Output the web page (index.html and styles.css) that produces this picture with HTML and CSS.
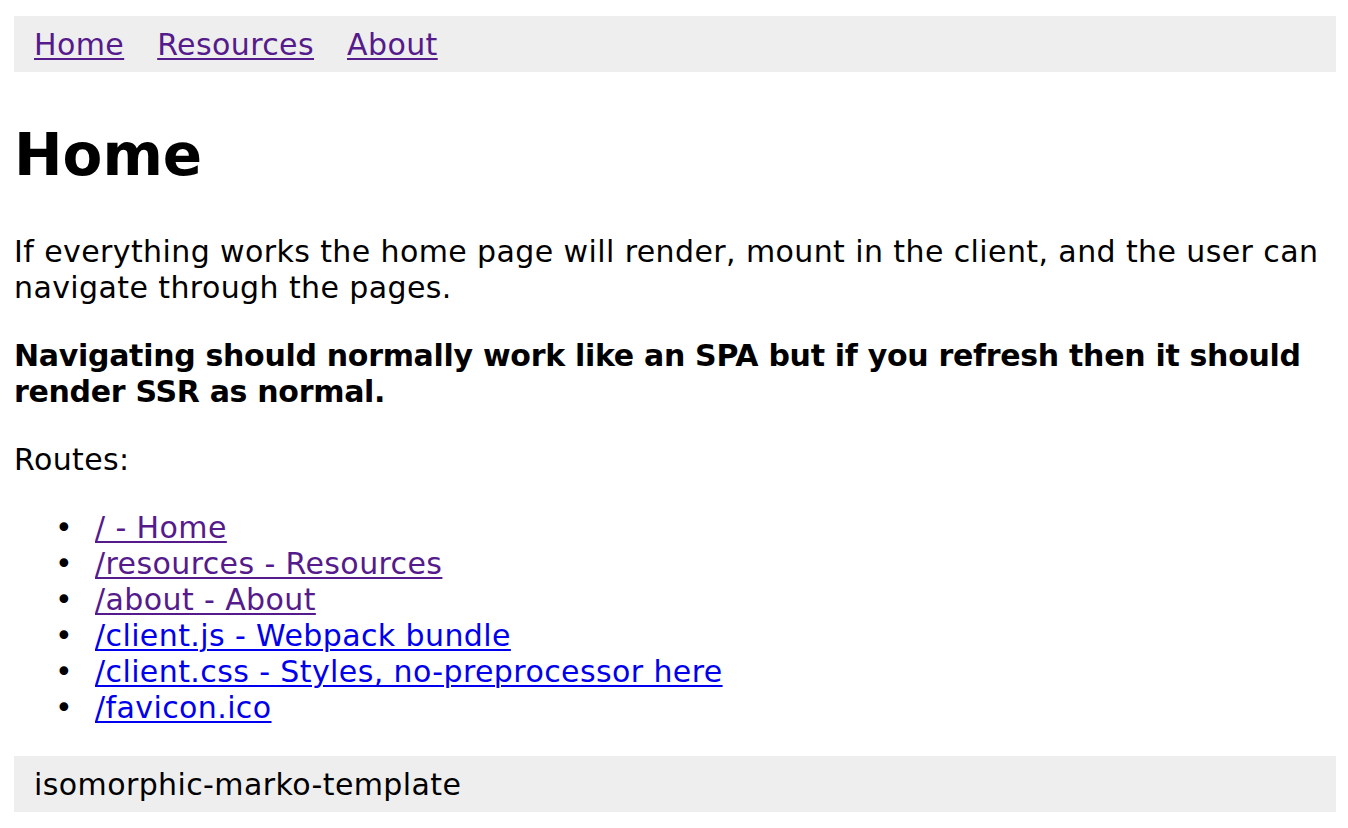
FILE: index.html
```html
<!DOCTYPE html>
<html lang="en">
<head>
<meta charset="utf-8">
<title>isomorphic-marko-template</title>
<link rel="stylesheet" href="styles.css">
</head>
<body>
<nav class="nav">
  <a class="link visited" href="#">Home</a>
  <a class="link visited" href="#">Resources</a>
  <a class="link visited" href="#">About</a>
</nav>
<main class="content">
  <h1 class="title">Home</h1>
  <p class="para">If everything works the home page will render, mount in the client, and the user can navigate through the pages.</p>
  <p class="para strong">Navigating should normally work like an SPA but if you refresh then it should render SSR as normal.</p>
  <p class="para">Routes:</p>
  <ul class="routes">
    <li class="route"><a class="link visited" href="#">/ - Home</a></li>
    <li class="route"><a class="link visited" href="#">/resources - Resources</a></li>
    <li class="route"><a class="link visited" href="#">/about - About</a></li>
    <li class="route"><a class="link" href="#">/client.js - Webpack bundle</a></li>
    <li class="route"><a class="link" href="#">/client.css - Styles, no-preprocessor here</a></li>
    <li class="route"><a class="link" href="#">/favicon.ico</a></li>
  </ul>
</main>
<footer class="footer">isomorphic-marko-template</footer>
</body>
</html>
```
FILE: styles.css
```css
html, body {
  background: #ffffff;
}
body {
  margin: 16px 12px 16px 14px;
  font-family: "DejaVu Sans", Verdana, sans-serif;
  font-size: 30px;
  line-height: 36px;
  letter-spacing: 0.4px;
  color: #000000;
}
.link {
  color: #0000ee;
  text-decoration: underline;
  text-underline-offset: 3px;
  text-decoration-thickness: 2px;
}
.link.visited {
  color: #551a8b;
}
.nav {
  background: #eeeeee;
  display: flex;
  gap: 33px;
  padding: 11px 20px 9px;
}
.content {
  display: block;
}
.title {
  font-size: 58px;
  line-height: 72px;
  font-weight: bold;
  letter-spacing: 0;
  margin: 47px 0 43px;
}
.para {
  margin: 0 0 32px;
}
.strong {
  font-weight: bold;
  letter-spacing: -0.3px;
}
.routes {
  margin: 0 0 30px;
  padding-left: 81px;
}
.route::marker {
  content: "\2022\2002\2009";
  font-size: 30px;
}
.footer {
  background: #eeeeee;
  padding: 11px 20px 9px;
}
```
